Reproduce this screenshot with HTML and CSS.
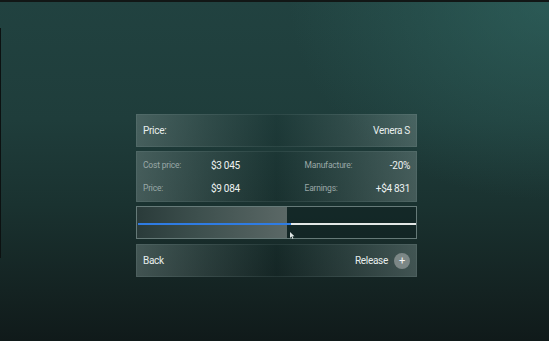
FILE: index.html
```html
<!DOCTYPE html>
<html lang="en">
<head>
    <meta charset="UTF-8" />
    <meta name="viewport" content="width=device-width, initial-scale=1.0"/>
    <title>Release</title>
    <link rel="stylesheet" href="styles.css">
</head>
<body>
    <div class="edge-top"></div>
    <div class="edge-left"></div>

    <div class="panel">
        <div class="row head">
            <span>Price:</span>
            <span>Venera S</span>
        </div>

        <div class="row stats">
            <div class="stat"><span class="label">Cost price:</span><span class="value">$3 045</span></div>
            <div class="stat right"><span class="label">Manufacture:</span><span class="value">-20%</span></div>
            <div class="stat"><span class="label">Price:</span><span class="value">$9 084</span></div>
            <div class="stat right"><span class="label">Earnings:</span><span class="value">+$4 831</span></div>
        </div>

        <div class="slider">
            <div class="fill"></div>
            <div class="track">
                <div class="track-on"></div>
                <div class="track-off"></div>
            </div>
            <svg class="pointer" width="5" height="7" viewBox="0 0 5 7"><path d="M0 0 L0 6 L1.5 4.6 L2.6 7 L3.4 6.6 L2.4 4.3 L4.4 4.3 Z" fill="#dfe5e4"/></svg>
        </div>

        <div class="row foot">
            <span>Back</span>
            <span class="release">Release <span class="plus">+</span></span>
        </div>
    </div>
</body>
</html>
```

FILE: styles.css
```css
html, body {
    height: 100%;
}
body {
    margin: 0;
    overflow: hidden;
    font-family: 'Roboto', 'Liberation Sans', sans-serif;
    color: #e8eeed;
    background:
        radial-gradient(ellipse 260px 200px at 100% 0%, rgba(52, 110, 104, 0.55), transparent 100%),
        linear-gradient(180deg, #214240 0%, #1f3d3b 35%, #1a3230 60%, #142322 85%, #101a1a 100%);
    position: relative;
}
.edge-top {
    position: absolute;
    top: 0; left: 0;
    width: 100%; height: 2px;
    background: #121716;
}
.edge-left {
    position: absolute;
    top: 28px; left: 0;
    width: 1px; height: 230px;
    background: #0c1111;
}
.panel {
    width: 281px;
    padding: 114px 0 0 136px;
    display: flex;
    flex-direction: column;
    gap: 4px;
}
.row {
    box-sizing: border-box;
    background: linear-gradient(90deg, rgba(120, 140, 138, 0.45) 0%, rgba(90, 110, 108, 0.3) 25%, rgba(20, 40, 40, 0.15) 50%, rgba(90, 112, 110, 0.3) 75%, rgba(120, 140, 138, 0.45) 100%);
    box-shadow: inset 0 0 0 1px rgba(160, 180, 178, 0.12);
    padding: 0 7px;
    font-size: 10px;
    letter-spacing: -0.3px;
}
.head, .foot {
    height: 33px;
    display: flex;
    align-items: center;
    justify-content: space-between;
}
.stats {
    height: 51px;
    display: grid;
    grid-template-columns: 1fr 1fr;
    column-gap: 30px;
    align-content: center;
    row-gap: 12px;
}
.stat {
    display: flex;
    align-items: center;
}
.stat .label {
    width: 68px;
    font-size: 8.5px;
    letter-spacing: -0.2px;
    color: #9aa8a7;
}
.stat .value {
    font-size: 10px;
    color: #eef2f1;
}
.stat.right {
    justify-content: space-between;
    padding-left: 13px;
}
.stat.right .label {
    width: auto;
}
.slider {
    position: relative;
    box-sizing: border-box;
    height: 33px;
    border: 1px solid rgba(170, 190, 188, 0.55);
    background: rgba(14, 30, 30, 0.45);
}
.fill {
    position: absolute;
    top: 0; left: 0; bottom: 0;
    width: 150px;
    background: linear-gradient(90deg, #2a3b3a 0%, #3d4f4d 40%, #5b6866 100%);
}
.track {
    position: absolute;
    left: 1px; right: 0;
    top: 16px;
    height: 2px;
    display: flex;
}
.track-on {
    width: 153px;
    background: #2f7ce3;
}
.track-off {
    flex: 1;
    background: #e3e7e6;
}
.pointer {
    position: absolute;
    left: 153px;
    top: 25px;
}
.foot {
    margin-top: 1px;
}
.release {
    display: flex;
    align-items: center;
    gap: 6px;
}
.plus {
    width: 16px;
    height: 16px;
    border-radius: 50%;
    background: #7c8786;
    color: #f4f6f6;
    font-size: 11px;
    display: flex;
    align-items: center;
    justify-content: center;
    line-height: 1;
}
```
